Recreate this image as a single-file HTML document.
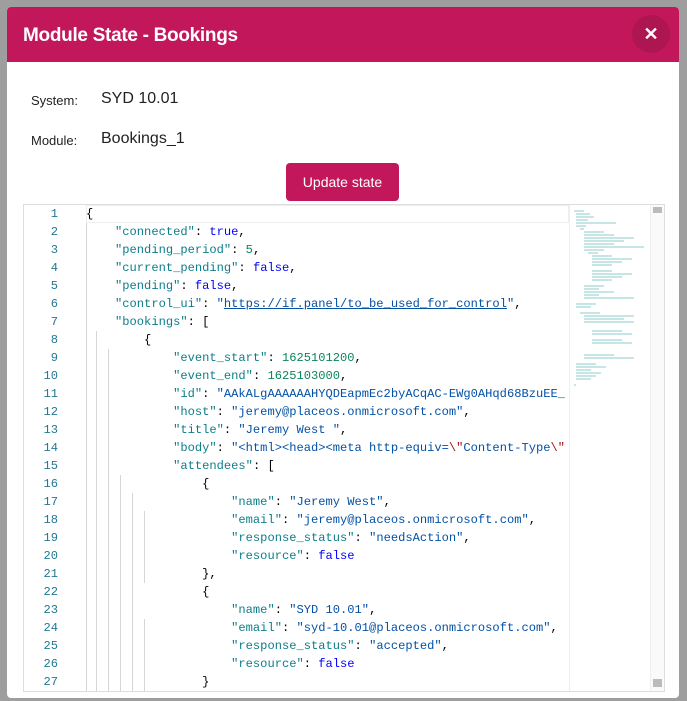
<!DOCTYPE html>
<html><head><style>
body{margin:0;width:687px;height:701px;background:#9e9e9e;position:relative;overflow:hidden;font-family:"Liberation Sans",sans-serif}
.dlg{position:absolute;left:7px;top:7px;width:672px;height:691px;background:#fff;border-radius:4px;overflow:hidden}
.hd{height:55px;background:#c2185b;color:#fff;font-size:19px;font-weight:bold;line-height:57px;padding-left:16px;letter-spacing:-0.3px}
.x{position:absolute;right:9px;top:8px;width:38px;height:38px;border-radius:50%;background:#ad1650;color:#fff;font-size:18px;text-align:center;line-height:38px;font-weight:bold}
.lbl{position:absolute;left:24px;font-size:13px;color:#222}
.val{position:absolute;left:94px;font-size:16px;color:#222}
.btn{position:absolute;left:279px;top:156px;width:113px;height:38px;background:#c2185b;border-radius:4px;color:#fff;font-size:14px;text-align:center;line-height:38px}
.ed{position:absolute;left:16px;top:197px;width:640px;height:486px;border:1px solid #ddd;overflow:hidden;font-family:"Liberation Mono",monospace;font-size:12.1px}
.ln{position:absolute;left:0;width:34px;text-align:right;color:#237893;height:18px;line-height:18px}
.cd{position:absolute;left:62px;white-space:pre;height:18px;line-height:18px;color:#000}
.k{color:#0d7e8a}.s{color:#0451a5}.n{color:#098658}.b{color:#0000ff}.u{color:#0451a5;text-decoration:underline}.e{color:#a31515}
.g{position:absolute;width:1px;background:#d6d6d6}
.mm{position:absolute;left:545px;top:0;width:81px;height:486px;border-left:1px solid #eee}
.sb{position:absolute;left:626px;top:0;width:13px;height:486px;background:#fafafa;border-left:1px solid #eee}
</style></head><body>
<div class="dlg">
<div class="hd">Module State - Bookings</div>
<div class="x">✕</div>
<div class="lbl" style="top:86px">System:</div><div class="val" style="top:83px">SYD 10.01</div>
<div class="lbl" style="top:126px">Module:</div><div class="val" style="top:123px">Bookings_1</div>
<div class="btn">Update state</div>
<div class="ed">
<div style="position:absolute;left:62px;top:0;width:483px;height:18px;border:1px solid #eee;box-sizing:border-box"></div>
<div class="g" style="left:62px;top:18px;height:468px"></div>
<div class="g" style="left:72px;top:126px;height:360px"></div>
<div class="g" style="left:84px;top:144px;height:342px"></div>
<div class="g" style="left:96px;top:270px;height:216px"></div>
<div class="g" style="left:108px;top:288px;height:198px"></div>
<div class="g" style="left:120px;top:306px;height:72px"></div>
<div class="g" style="left:120px;top:414px;height:72px"></div>
<div id="c"></div>
<div class="mm"><svg width="81" height="486">
<g stroke="#4aa" stroke-width="1" opacity=".6">
<path d="M4 6h10M6 9h14M6 12h18M6 15h12M6 18h40M6 21h10M10 24h4M14 27h20M14 30h30M14 33h50M14 36h40M14 39h30M14 42h60M14 45h20M18 48h10M22 51h20M22 54h40M22 57h30M22 60h20M22 66h20M22 69h40M22 72h30M22 75h20M14 81h20M14 84h15M14 87h30M14 90h15M14 93h50M6 99h20M6 102h15M10 108h20M14 111h50M14 114h40M14 117h50M22 126h30M22 129h40M22 135h30M22 138h40M14 150h30M14 153h50M6 159h20M6 162h30M6 165h15M6 168h25M6 171h20M6 174h15M4 180h2"/></g></svg></div>
<div class="sb"><div style="position:absolute;left:2px;top:2px;width:9px;height:6px;background:#bbb"></div><div style="position:absolute;left:2px;top:474px;width:9px;height:8px;background:#bbb"></div></div>
</div>
</div>
<script>
var L=[
'{',
'    <span class=k>"connected"</span>: <span class=b>true</span>,',
'    <span class=k>"pending_period"</span>: <span class=n>5</span>,',
'    <span class=k>"current_pending"</span>: <span class=b>false</span>,',
'    <span class=k>"pending"</span>: <span class=b>false</span>,',
'    <span class=k>"control_ui"</span>: <span class=s>"</span><span class=u>https://if.panel/to_be_used_for_control</span><span class=s>"</span>,',
'    <span class=k>"bookings"</span>: [',
'        {',
'            <span class=k>"event_start"</span>: <span class=n>1625101200</span>,',
'            <span class=k>"event_end"</span>: <span class=n>1625103000</span>,',
'            <span class=k>"id"</span>: <span class=s>"AAkALgAAAAAAHYQDEapmEc2byACqAC-EWg0AHqd68BzuEE_</span>',
'            <span class=k>"host"</span>: <span class=s>"jeremy@placeos.onmicrosoft.com"</span>,',
'            <span class=k>"title"</span>: <span class=s>"Jeremy West "</span>,',
'            <span class=k>"body"</span>: <span class=s>"&lt;html&gt;&lt;head&gt;&lt;meta http-equiv=</span><span class=e>\\"</span><span class=s>Content-Type</span><span class=e>\\"</span>',
'            <span class=k>"attendees"</span>: [',
'                {',
'                    <span class=k>"name"</span>: <span class=s>"Jeremy West"</span>,',
'                    <span class=k>"email"</span>: <span class=s>"jeremy@placeos.onmicrosoft.com"</span>,',
'                    <span class=k>"response_status"</span>: <span class=s>"needsAction"</span>,',
'                    <span class=k>"resource"</span>: <span class=b>false</span>',
'                },',
'                {',
'                    <span class=k>"name"</span>: <span class=s>"SYD 10.01"</span>,',
'                    <span class=k>"email"</span>: <span class=s>"syd-10.01@placeos.onmicrosoft.com"</span>,',
'                    <span class=k>"response_status"</span>: <span class=s>"accepted"</span>,',
'                    <span class=k>"resource"</span>: <span class=b>false</span>',
'                }'];
var h='';for(var i=0;i<L.length;i++){h+='<div class="ln" style="top:'+(i*18)+'px">'+(i+1)+'</div><div class="cd" style="top:'+(i*18)+'px">'+L[i]+'</div>';}
document.getElementById('c').innerHTML=h;
</script>
</body></html>
